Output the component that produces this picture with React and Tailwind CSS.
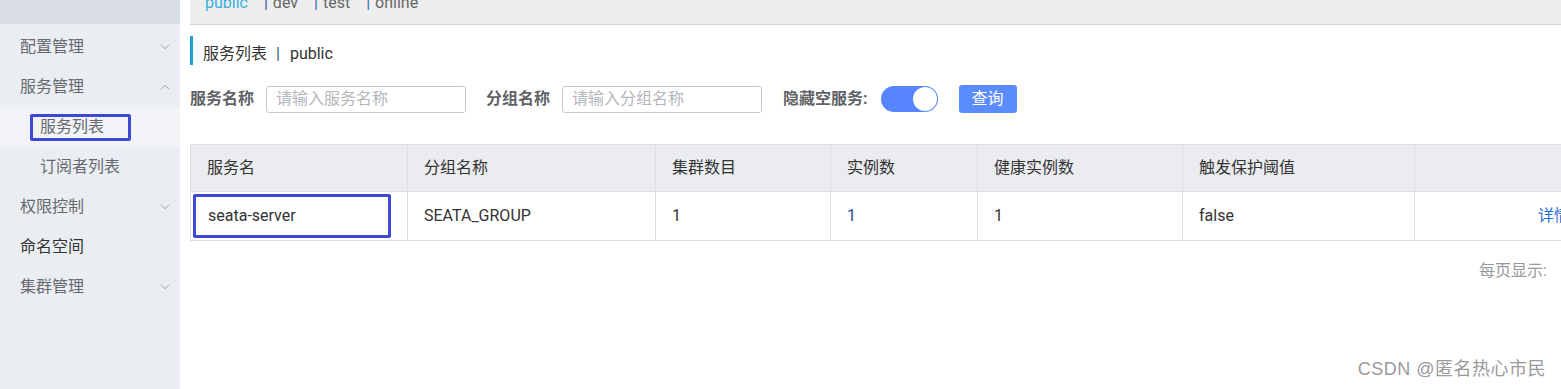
import React from "react";

const font = { fontFamily: 'Roboto, "Noto Sans CJK SC", sans-serif' };

function Chevron({ up }) {
  return (
    <svg width="10" height="6" viewBox="0 0 10 6" className="text-[#9aa0ab]">
      {up ? (
        <path d="M1 5.2 L5 1.2 L9 5.2" fill="none" stroke="currentColor" strokeWidth="1" />
      ) : (
        <path d="M1 0.8 L5 4.8 L9 0.8" fill="none" stroke="currentColor" strokeWidth="1" />
      )}
    </svg>
  );
}

function MenuItem({ label, arrow, dark }) {
  return (
    <div className="h-[40px] flex items-center justify-between pl-[20px] pr-[10px]">
      <span className={`text-[16px] leading-[20px] ${dark ? "text-[#333333]" : "text-[#666a70]"}`}>{label}</span>
      {arrow && <Chevron up={arrow === "up"} />}
    </div>
  );
}

export default function App() {
  const cols = [
    { w: 217, h: "服务名" },
    { w: 248, h: "分组名称" },
    { w: 175, h: "集群数目" },
    { w: 147, h: "实例数" },
    { w: 205, h: "健康实例数" },
    { w: 232, h: "触发保护阈值" },
    { w: 300, h: "" },
  ];
  return (
    <div className="relative flex h-[389px] w-[1561px] overflow-hidden bg-white" style={font}>
      <aside className="w-[180px] shrink-0 bg-[#eaedf1] flex flex-col">
        <div className="h-[24px] bg-[#d9dde4]" />
        <div className="h-[3px]" />
        <MenuItem label="配置管理" arrow="down" />
        <MenuItem label="服务管理" arrow="up" />
        <div className="h-[40px] bg-[#f1f3f6] flex items-center pl-[30px]">
          <div className="h-[27px] border-[3px] border-[#3f47d5] rounded-[2px] pl-[7px] pr-[24px] flex items-center">
            <span className="text-[16px] leading-[20px] text-[#666a70]">服务列表</span>
          </div>
        </div>
        <div className="h-[40px] flex items-center pl-[40px]">
          <span className="text-[16px] leading-[20px] text-[#666a70]">订阅者列表</span>
        </div>
        <MenuItem label="权限控制" arrow="down" />
        <MenuItem label="命名空间" dark />
        <MenuItem label="集群管理" arrow="down" />
      </aside>

      <main className="flex-1 min-w-0 overflow-hidden pl-[10px]">
        <div className="h-[25px] bg-[#eeeeee] border-b border-[#d3d3d3] flex items-start pl-[15px] overflow-hidden">
          <div className="-mt-[6px] flex items-center text-[16px] leading-[18px] text-[#666]">
            <span className="text-[#3aaee0]">public</span>
            <span className="ml-[16px] text-[#4a4fa0]">|</span>
            <span className="ml-[5px]">dev</span>
            <span className="ml-[16px] text-[#3a6fb0]">|</span>
            <span className="ml-[5px]">test</span>
            <span className="ml-[16px] text-[#3a6fb0]">|</span>
            <span className="ml-[5px]">online</span>
          </div>
        </div>

        <div className="mt-[11px] h-[29px] border-l-[3px] border-[#1b9fd6] pl-[10px] pt-[6px] flex items-center text-[16px] text-[#333]">
          <span>服务列表</span>
          <span className="ml-[9px] mr-[10px] text-[#2a5a8a]">|</span>
          <span>public</span>
        </div>

        <div className="mt-[20px] h-[28px] flex items-center text-[16px]">
          <span className="font-bold text-[#606266]">服务名称</span>
          <div className="ml-[12px] w-[200px] h-[27px] border border-[#c6c8d0] rounded-[3px] flex items-center pl-[9px] text-[#b4b6bb]">
            请输入服务名称
          </div>
          <span className="ml-[20px] font-bold text-[#606266]">分组名称</span>
          <div className="ml-[12px] w-[200px] h-[27px] border border-[#c6c8d0] rounded-[3px] flex items-center pl-[9px] text-[#b4b6bb]">
            请输入分组名称
          </div>
          <span className="ml-[21px] font-bold text-[#606266]">隐藏空服务:</span>
          <div className="ml-[13px] w-[57px] h-[26px] rounded-full bg-[#5685ff] flex items-center justify-end pr-[1px]">
            <div className="w-[24px] h-[24px] rounded-full bg-white" />
          </div>
          <button className="ml-[21px] w-[58px] h-[28px] rounded-[3px] bg-[#5b8cff] text-white text-[16px] leading-[20px]">
            查询
          </button>
        </div>

        <table className="mt-[31px] border-collapse table-fixed text-[16px] text-[#333]" style={{ width: 1524 }}>
          <colgroup>
            {cols.map((c, i) => (
              <col key={i} style={{ width: c.w }} />
            ))}
          </colgroup>
          <thead>
            <tr className="h-[47px] bg-[#ebecf0]">
              {cols.map((c, i) => (
                <th key={i} className="border border-[#dcdee4] text-left font-normal pl-[16px]">
                  {c.h}
                </th>
              ))}
            </tr>
          </thead>
          <tbody>
            <tr className="h-[48px]">
              <td className="border border-[#dcdee4] p-[2px]">
                <div className="w-[198px] h-[44px] border-[3px] border-[#3f47d5] rounded-[2px] flex items-center pl-[12px]">
                  seata-server
                </div>
              </td>
              <td className="border border-[#dcdee4] pl-[16px]">SEATA_GROUP</td>
              <td className="border border-[#dcdee4] pl-[16px]">1</td>
              <td className="border border-[#dcdee4] pl-[16px] text-[#2a4a8a]">1</td>
              <td className="border border-[#dcdee4] pl-[16px]">1</td>
              <td className="border border-[#dcdee4] pl-[16px]">false</td>
              <td className="border border-[#dcdee4] pl-[123px] text-[#1f6fd0]">详情</td>
            </tr>
          </tbody>
        </table>

        <div className="mt-[19px] flex justify-end pr-[14px] text-[16px] leading-[22px] text-[#999]">
          每页显示:
        </div>
      </main>

      <div
        className="absolute right-[15px] bottom-[9px] text-[18px] leading-[22px] tracking-[0.5px] text-[#9a9a9a]"
        style={{ fontFamily: '"Liberation Sans", "Noto Sans CJK SC", sans-serif', textShadow: "0 0 1px #fff" }}
      >
        CSDN @匿名热心市民
      </div>
    </div>
  );
}
